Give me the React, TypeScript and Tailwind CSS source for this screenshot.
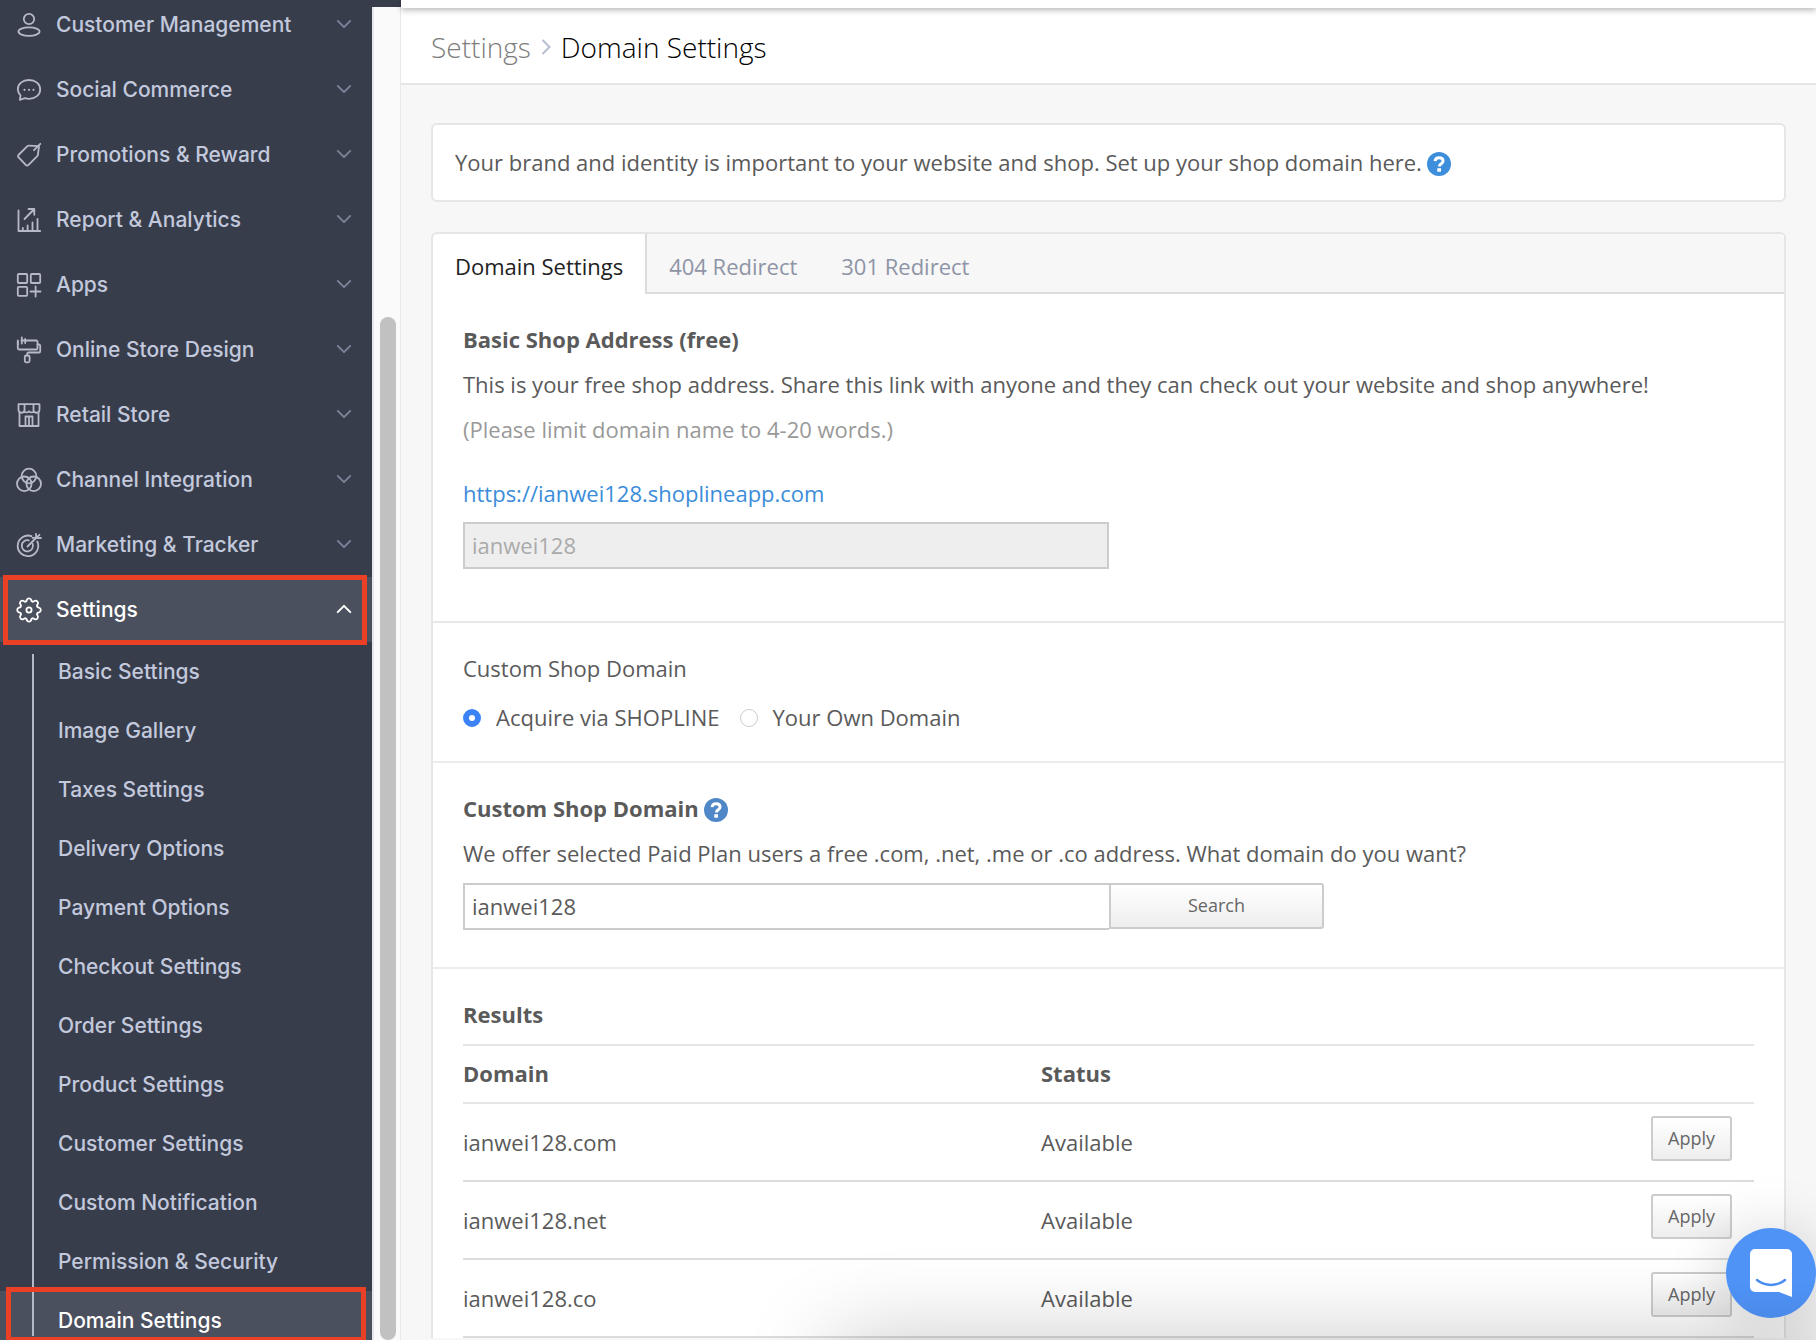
import { useState } from "react";
import type { ReactNode } from "react";
import { ChevronDown, ChevronUp } from "lucide-react";

type MenuItem = {
  label: string;
  icon: ReactNode;
};

const MENU: MenuItem[] = [
  {
    label: "Customer Management",
    icon: (
      <>
        <circle cx="12" cy="6" r="5.2" />
        <ellipse cx="12" cy="18.6" rx="10.6" ry="4.2" />
      </>
    ),
  },
  {
    label: "Social Commerce",
    icon: (
      <>
        <path d="M2.8 21.8 3.6 17.6A9.6 9.6 0 0 1 .8 11.4C.8 6 5.6 2 12 2s11.2 4 11.2 9.4-4.8 9.4-11.2 9.4a14 14 0 0 1-4-.6Z" />
        <path d="M7.500 11.8h.01M12 11.8h.01M16.500 11.8h.01" strokeWidth="2.2" />
      </>
    ),
  },
  {
    label: "Promotions & Reward",
    icon: (
      <>
        <path d="M22 3.2 11.8 2.6a2 2 0 0 0-1.4.5L1.4 12a1.6 1.6 0 0 0 0 2.2l7.6 8a1.6 1.6 0 0 0 2.3 0l9-9a2 2 0 0 0 .6-1.3Z" />
        <path d="M17 7.2 23.3.8" />
      </>
    ),
  },
  {
    label: "Report & Analytics",
    icon: (
      <>
        <path d="M1.500 2.500v20.500h21.700M5.800 20v3M10.600 17.500V23M15.500 14.500V23M20.500 11v12" />
        <path d="M7.500 11 16.800 1.500M11.500 1h5.800v5.800" />
      </>
    ),
  },
  {
    label: "Apps",
    icon: (
      <>
        <rect x=".8" y="1" width="9.4" height="9" rx="1" />
        <rect x="13.8" y="1" width="9.4" height="9" rx="1" />
        <rect x=".8" y="13.8" width="9.4" height="9" rx="1" />
        <path d="M18.600 13.500v10M13.500 18.500h10" />
      </>
    ),
  },
  {
    label: "Online Store Design",
    icon: (
      <>
        <path d="M4.500 2.500h14.700a1.300 1.300 0 0 1 1.300 1.300v6.400a1.300 1.300 0 0 1-1.300 1.300H2.100A1.300 1.300 0 0 1 .8 10.200V3.800" />
        <path d="M.8 2.500v4M4.800-.5v6M8.200 1v4" />
        <path d="M20.500 6.500h1.400a1.300 1.300 0 0 1 1.300 1.300v5.400a1.300 1.300 0 0 1-1.300 1.300H11.500a1.300 1.300 0 0 0-1.300 1.300v1.700" />
        <rect x="7.8" y="17.5" width="4.8" height="6.8" rx="1.5" />
      </>
    ),
  },
  {
    label: "Retail Store",
    icon: (
      <>
        <path d="M1.500 1.200h21v5.600a3 3 0 0 1-5.600 1.400 3 3 0 0 1-4.900 0 3 3 0 0 1-4.900 0A3 3 0 0 1 1.500 6.800ZM7.500 1.200v7M16.500 1.200v7" />
        <path d="M2.500 9.500V23h19V9.500" />
        <path d="M8.500 23v-9.500h7V23M12 14v9" />
      </>
    ),
  },
  {
    label: "Channel Integration",
    icon: (
      <>
        <circle cx="12" cy="8" r="7.3" />
        <circle cx="7.3" cy="15.8" r="7.3" />
        <circle cx="16.7" cy="15.8" r="7.3" />
      </>
    ),
  },
  {
    label: "Marketing & Tracker",
    icon: (
      <>
        <path d="M20.300 8.500A10.300 10.300 0 1 1 14.500 3.200" />
        <path d="M15.600 10.800a5.600 5.600 0 1 1-3.800-3.400" />
        <path d="M10.500 13.500 19 5M19 5V.8M19 5h5M19 5l-3.500-.2M22.500 1.800 19 5" />
      </>
    ),
  },
];

const GEAR = (
  <>
    <path d="M9.800 1.800a2.400 2.400 0 0 1 4.400 0l.4 1.400 1.400.6 1.400-.8a2.400 2.400 0 0 1 3.300 3.300l-.8 1.400.6 1.500 1.500.4a2.500 2.500 0 0 1 0 4.800l-1.500.4-.6 1.500.8 1.400a2.400 2.400 0 0 1-3.300 3.300l-1.400-.8-1.400.6-.4 1.400a2.400 2.400 0 0 1-4.400 0l-.4-1.400-1.400-.6-1.400.8a2.400 2.400 0 0 1-3.300-3.300l.8-1.400-.6-1.500-1.500-.4a2.500 2.500 0 0 1 0-4.800l1.500-.4.6-1.500-.8-1.400A2.400 2.400 0 0 1 6.600 3l1.400.8 1.400-.6Z" />
    <circle cx="12" cy="12" r="2.6" />
  </>
);

const SETTINGS_LINKS = [
  "Basic Settings",
  "Image Gallery",
  "Taxes Settings",
  "Delivery Options",
  "Payment Options",
  "Checkout Settings",
  "Order Settings",
  "Product Settings",
  "Customer Settings",
  "Custom Notification",
  "Permission & Security",
  "Domain Settings",
];

const TABS = ["Domain Settings", "404 Redirect", "301 Redirect"];

const RESULTS = [
  { domain: "ianwei128.com", status: "Available" },
  { domain: "ianwei128.net", status: "Available" },
  { domain: "ianwei128.co", status: "Available" },
];

const MenuIcon = ({ children }: { children: ReactNode }) => (
  <svg
    viewBox="0 0 24 24"
    className="h-6 w-6 shrink-0 overflow-visible"
    fill="none"
    stroke="currentColor"
    strokeWidth="1.8"
    strokeLinecap="round"
    strokeLinejoin="round"
    aria-hidden="true"
  >
    {children}
  </svg>
);

const HelpIcon = ({ className }: { className: string }) => (
  <svg viewBox="0 0 24 24" className={`mt-[3px] h-6 w-6 shrink-0 ${className}`} aria-hidden="true">
    <circle cx="12" cy="12" r="12" fill="currentColor" />
    <path
      d="M8 9.200C8.200 6.800 9.900 5.700 12.100 5.700c2.300 0 4 1.200 4 3.200 0 2.900-3.700 2.700-3.700 5.500"
      fill="none"
      stroke="#fff"
      strokeWidth="2.9"
    />
    <path d="M10.300 16.200h3.700v3.500h-3.700z" fill="#fff" />
  </svg>
);

const Sidebar = () => (
  <nav className="w-[372px] shrink-0 overflow-hidden bg-[#383d4c] font-[Inter,sans-serif] text-[21px] font-medium text-[#c3c9dc]">
    <ul className="-mt-2">
      {MENU.map((item) => (
        <li key={item.label}>
          <a href="#" className="flex h-[65px] items-center gap-[15px] pr-[18px] pl-[17px]">
            <span className="text-[#b6bac8]">
              <MenuIcon>{item.icon}</MenuIcon>
            </span>
            <span className="flex-1 whitespace-nowrap">{item.label}</span>
            <ChevronDown className="mb-px h-5 w-5 scale-125 text-[#7d8399]" strokeWidth={1.8} />
          </a>
        </li>
      ))}
      <li>
        <a
          href="#"
          className="relative flex h-[65px] items-center gap-[15px] bg-[#4b505e] pr-[18px] pl-[17px] text-white"
        >
          <MenuIcon>{GEAR}</MenuIcon>
          <span className="flex-1">Settings</span>
          <ChevronUp className="mb-px h-5 w-5 scale-125" strokeWidth={2} />
          <span className="absolute -top-0.5 right-[5px] -bottom-[3px] left-[3px] border-[5px] border-[#ea4025]" />
        </a>
        <ul className="relative">
          {SETTINGS_LINKS.map((label) => {
            const active = label === "Domain Settings";
            return (
              <li key={label}>
                <a
                  href="#"
                  className={`flex h-[59px] items-center pl-[58px] ${active ? "bg-[#4b505e] text-white" : ""}`}
                >
                  {label}
                </a>
              </li>
            );
          })}
          <li aria-hidden="true" className="absolute top-3 bottom-3.5 left-8 w-0.5 bg-[#b4bac9]" />
          <li
            aria-hidden="true"
            className="absolute right-1.5 bottom-2 left-1.5 h-[55px] border-[5px] border-[#ea4025]"
          />
        </ul>
      </li>
    </ul>
  </nav>
);

const ScrollTrack = () => (
  <div className="flex w-[29px] shrink-0 flex-col">
    <div className="h-[7px] bg-[#383d4c]" />
    <div className="flex flex-1 flex-col items-end border-r border-l-2 border-r-[#e9e9e9] border-l-[#e6e6e6] bg-[#fafafa] pt-[310px] pr-1">
      <div className="w-4 flex-1 rounded-full bg-[#c1c1c1]" />
    </div>
  </div>
);

const buttonStyle =
  "rounded-[3px] border-2 border-[#cccccc] bg-linear-to-b from-white to-[#eeeeee] text-[18px] leading-6 text-[#666666]";

const radioStyle =
  "h-[18px] w-[18px] appearance-none rounded-full border border-[#cccccc] bg-white checked:border-[6px] checked:border-[#3b82f7]";

const DomainPanel = () => {
  const [tab, setTab] = useState("Domain Settings");
  const [source, setSource] = useState("shopline");
  const [domain, setDomain] = useState("ianwei128");

  return (
    <section className="mt-[30px] rounded-t-md border-2 border-b-0 border-[#e6e6e6] bg-white">
      <div role="tablist" className="flex h-[60px] rounded-t-md bg-[#f7f7f7]">
        {TABS.map((name) => (
          <button
            key={name}
            role="tab"
            type="button"
            aria-selected={tab === name}
            onClick={() => setTab(name)}
            className={
              tab === name
                ? "rounded-tl-md border-r-2 border-[#dcdcdc] bg-white px-[22px] pt-1 text-[#222222]"
                : "border-b-2 border-[#dcdcdc] px-[22px] pt-1.5 text-[#8e94a6]"
            }
          >
            {name}
          </button>
        ))}
        <div className="flex-1 border-b-2 border-[#dcdcdc]" />
      </div>

      <div className="border-b-2 border-[#e8e8e8] px-[30px] pt-[23px] pb-[52px]">
        <h2 className="leading-[45px] font-bold">Basic Shop Address (free)</h2>
        <p className="leading-[45px]">
          This is your free shop address. Share this link with anyone and they can check out your website and shop
          anywhere!
        </p>
        <p className="leading-[45px] text-[#999999]">(Please limit domain name to 4-20 words.)</p>
        <a href="#" className="mt-[19px] block leading-[45px] text-[#3b8dd9]">
          https://ianwei128.shoplineapp.com
        </a>
        <input
          aria-label="Basic shop address"
          className="mt-1.5 block h-[47px] w-full max-w-[646px] border-2 border-[#cccccc] bg-[#eeeeee] px-[7px] pb-0.5 text-[#aaaaaa]"
          value="ianwei128"
          disabled
          readOnly
        />
      </div>

      <fieldset className="border-b-2 border-[#ececec] px-[30px] pt-[23px] pb-[21px]">
        <legend className="float-left w-full leading-[45px]">Custom Shop Domain</legend>
        <div className="clear-both flex items-center gap-5 pt-1 leading-[45px]">
          <label className="flex items-center gap-[15px]">
            <input
              type="radio"
              name="source"
              className={radioStyle}
              checked={source === "shopline"}
              onChange={() => setSource("shopline")}
            />
            Acquire via SHOPLINE
          </label>
          <label className="flex items-center gap-[15px]">
            <input
              type="radio"
              name="source"
              className={radioStyle}
              checked={source === "own"}
              onChange={() => setSource("own")}
            />
            Your Own Domain
          </label>
        </div>
      </fieldset>

      <div className="border-b-2 border-[#ececec] px-[30px] pt-[23px] pb-[37px]">
        <h2 className="flex items-center gap-[5px] leading-[45px] font-bold">
          Custom Shop Domain <HelpIcon className="text-[#5088c7]" />
        </h2>
        <p className="leading-[45px]">
          We offer selected Paid Plan users a free .com, .net, .me or .co address. What domain do you want?
        </p>
        <div className="mt-[7px] flex items-start">
          <input
            aria-label="Custom domain"
            className="h-[47px] w-full max-w-[646px] border-2 border-r-0 border-[#cccccc] bg-white px-[7px] pb-0.5"
            value={domain}
            onChange={(e) => setDomain(e.target.value)}
          />
          <button type="button" className={`h-[46px] w-[215px] shrink-0 rounded-l-none pb-0.5 ${buttonStyle}`}>
            Search
          </button>
        </div>
      </div>

      <div className="px-[30px] pt-[23px]">
        <h2 className="leading-[45px] font-bold">Results</h2>
        <table className="mt-[7px] w-full table-fixed border-collapse text-left">
          <thead>
            <tr className="h-[58px] border-y-2 border-[#e6e6e6]">
              <th className="w-[578px] p-0 pb-0.5">Domain</th>
              <th className="p-0 pb-0.5">Status</th>
              <th className="w-[103px] p-0" aria-label="Action" />
            </tr>
          </thead>
          <tbody>
            {RESULTS.map((row) => (
              <tr key={row.domain} className="h-[78px] border-b-2 border-[#dcdcdc]">
                <td className="p-0">{row.domain}</td>
                <td className="p-0">{row.status}</td>
                <td className="p-0 pb-2">
                  <button type="button" className={`block h-[45px] w-[81px] ${buttonStyle}`}>
                    Apply
                  </button>
                </td>
              </tr>
            ))}
          </tbody>
        </table>
      </div>
    </section>
  );
};

const ChatLauncher = () => (
  <button
    type="button"
    aria-label="Open chat"
    className="fixed right-0 bottom-[22px] flex h-[90px] w-[90px] items-center justify-center rounded-full bg-linear-to-b from-[#4f93f7] from-60% to-[#4a8ae8] shadow-[0_2px_60px_rgba(0,0,0,0.18)]"
  >
    <svg viewBox="0 0 42 48" className="h-12 w-[42px]" aria-hidden="true">
      <path d="M5 0h32a5 5 0 0 1 5 5v43l-13-5H5a5 5 0 0 1-5-5V5a5 5 0 0 1 5-5Z" fill="#fff" />
      <path d="M7 31c8 6.500 20 6.500 28 0" fill="none" stroke="#4b8df0" strokeWidth="2.5" strokeLinecap="round" />
    </svg>
  </button>
);

export default function App() {
  return (
    <div className="flex h-screen overflow-hidden bg-[#f7f7f7]">
      <Sidebar />
      <ScrollTrack />
      <main className="min-w-0 flex-1 font-['Open_Sans',sans-serif] text-[22px] text-[#5a5a5a]">
        <div className="relative h-2 bg-white shadow-[0_2px_6px_rgba(0,0,0,0.3)]" />
        <header className="flex h-[77px] items-center gap-2.5 border-b-2 border-[#e6e6e6] bg-white px-[30px] pt-0.5 text-[28px] font-light">
          <a href="#" className="text-[#7d7d7d]">
            Settings
          </a>
          <svg viewBox="0 0 10 16" className="h-4 w-2.5" fill="none" stroke="#b6bed2" strokeWidth="2" aria-hidden="true">
            <path d="M1.500 1 8.500 8l-7 7" />
          </svg>
          <h1 className="text-black">Domain Settings</h1>
        </header>

        <div className="px-[30px] pt-[38px]">
          <div className="flex h-[79px] items-center gap-[5px] rounded-md border-2 border-[#e6e6e6] bg-white px-[22px]">
            <p>Your brand and identity is important to your website and shop. Set up your shop domain here.</p>
            <HelpIcon className="text-[#3d8edb]" />
          </div>
          <DomainPanel />
        </div>
      </main>

      <div className="pointer-events-none fixed right-0 -bottom-24 left-[850px] h-20 shadow-[0_0_90px_16px_rgba(0,0,0,0.22)]" />
      <ChatLauncher />
    </div>
  );
}
